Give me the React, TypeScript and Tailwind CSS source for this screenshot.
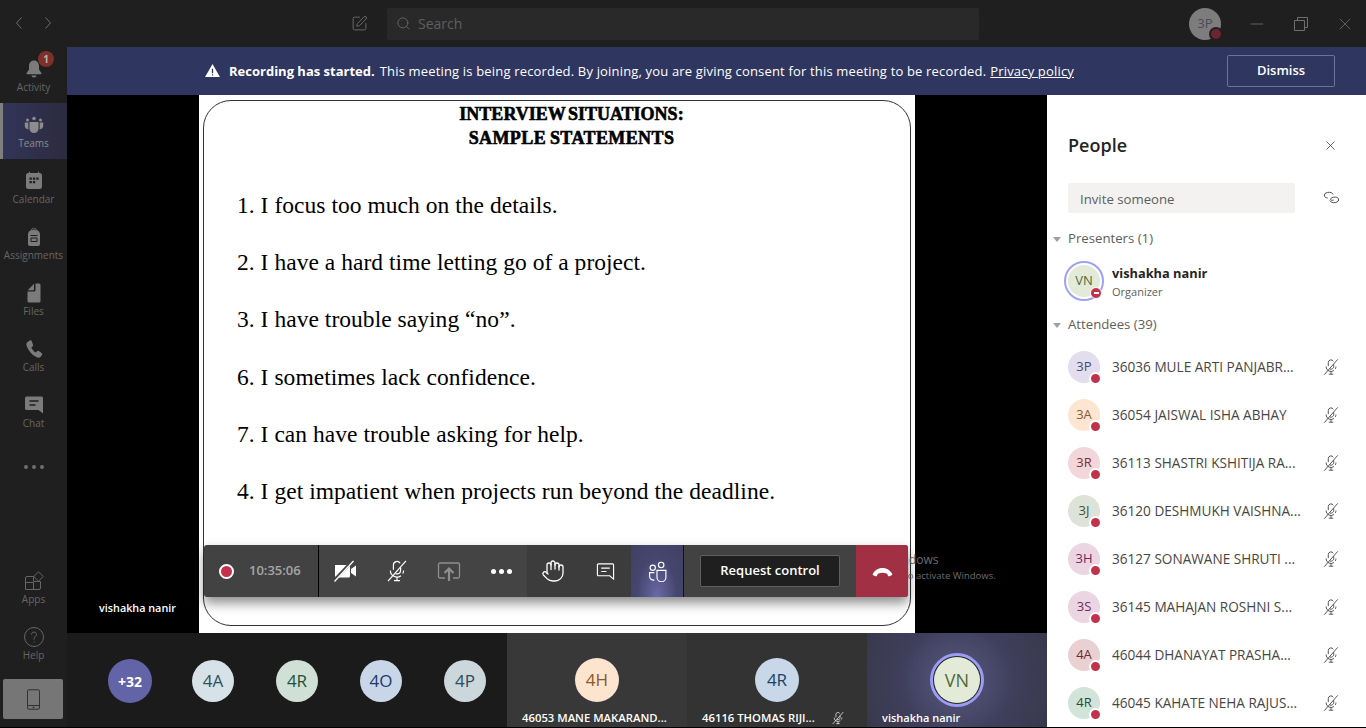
import { Hand, Minus, Search, SquarePen, X } from 'lucide-react';

const ui = { fontFamily: '"Open Sans", "Noto Sans", sans-serif' };
const slideFont = { fontFamily: '"Liberation Serif", serif' };

const MicOff = ({ className = '' }: { className?: string }) => (
  <svg viewBox="0 0 20 20" fill="none" stroke="currentColor" strokeWidth="1" className={className}>
    <path d="M7 9V5a3 3 0 0 1 5.6-1.4M13 7v2.5a3 3 0 0 1-4.4 2.6" />
    <path d="M4.5 9.5a5.5 5.5 0 0 0 8.8 4.4M15.5 9.5a5.5 5.5 0 0 1-.7 2.6M10 15v3M7.5 18h5" />
    <path d="M2.5 18.5 17.5 1.5" />
  </svg>
);

const RailIcon = ({ name }: { name: string }) => {
  const c = 'w-5 h-5';
  switch (name) {
    case 'Activity':
      return (
        <svg viewBox="0 0 20 20" className={c} fill="#7b7b7b">
          <path d="M10 1.5c-3.2 0-5 2.6-5 5.6v3.4L2.6 14c-.4.6 0 1.2.7 1.2h13.4c.7 0 1.1-.6.7-1.2L15 10.500V7.100c0-3-1.800-5.600-5-5.600Z" />
          <path d="M7.500 16.500h5a2.500 2 0 0 1-5 0Z" />
        </svg>
      );
    case 'Teams':
      return (
        <svg viewBox="0 0 20 20" className={c} fill="#8c8c8c">
          <circle cx="10" cy="3.500" r="1.800" />
          <circle cx="3.500" cy="5" r="1.500" />
          <circle cx="16.500" cy="5" r="1.500" />
          <path d="M5.500 7h9v6.500a4.500 4.500 0 0 1-9 0Z" />
          <path d="M.8 7.500h3.500v5.500l.3 1.200C2.500 14.300.8 13 .8 11ZM19.200 7.500h-3.500v5.500l-.3 1.200c2.100.1 3.800-1.200 3.800-3.200Z" />
        </svg>
      );
    case 'Calendar':
      return (
        <svg viewBox="0 0 20 20" className={c}>
          <path fill="#7b7b7b" d="M5 .8h1v1.200h8V.8h1V2h.5A2.500 2.500 0 0 1 18 4.500v11a2.500 2.500 0 0 1-2.500 2.500h-11A2.500 2.500 0 0 1 2 15.500v-11A2.500 2.500 0 0 1 4.500 2H5Z" />
          <path fill="#1f1f1f" d="M5.500 6.500h2.300v2.300H5.500zM8.900 6.500h2.300v2.300H8.900zM12.300 6.500h2.300v2.300h-2.300zM5.500 10h2.300v2.300H5.500zM8.900 10h2.300v2.300H8.900z" />
        </svg>
      );
    case 'Assignments':
      return (
        <svg viewBox="0 0 20 20" className={c}>
          <path fill="#7b7b7b" d="M10 .8c1.500 0 2.600 1 2.900 2.400 1.900.6 3.100 2 3.100 4.300V17a2 2 0 0 1-2 2H6a2 2 0 0 1-2-2V7.500c0-2.300 1.200-3.700 3.100-4.300C7.400 1.800 8.500.8 10 .8Z" />
          <path fill="none" stroke="#1f1f1f" d="M6.500 8.500h7M7 11h6v3.500H7zM8.500 3.200a1.500 1.500 0 0 1 3 0" />
        </svg>
      );
    case 'Files':
      return (
        <svg viewBox="0 0 20 20" className={c} fill="#7b7b7b">
          <path d="M11.500 .5H15a1.500 1.500 0 0 1 1.500 1.500v16a1.500 1.500 0 0 1-1.500 1.500H5A1.500 1.500 0 0 1 3.500 18V8.500H10A1.500 1.500 0 0 0 11.500 7Z" />
          <path d="M10 .8V6.500a.7.700 0 0 1-.7.7H3.700Z" />
        </svg>
      );
    case 'Calls':
      return (
        <svg viewBox="0 0 20 20" className={c} fill="#7b7b7b">
          <path d="M5.800 1.500 3.500 3C2.300 3.900 2 5.500 2.800 7.400c1.900 4.700 5.300 8.400 9.500 10.700 1.800 1 3.500.7 4.400-.4l1.300-1.800c.5-.7.300-1.500-.4-2l-2.800-1.900c-.7-.4-1.400-.3-1.900.3l-1 1.200c-2-1.100-3.600-3-4.600-5.100l1.200-1c.6-.5.800-1.300.4-2L7.700 2c-.4-.8-1.300-1-1.900-.5Z" />
        </svg>
      );
    case 'Chat':
      return (
        <svg viewBox="0 0 20 20" className={c}>
          <path fill="#7b7b7b" d="M2.500 1.500h15A1.500 1.500 0 0 1 19 3v15.500L14.500 15h-12A1.500 1.500 0 0 1 1 13.500V3a1.500 1.500 0 0 1 1.500-1.500Z" />
          <path stroke="#1f1f1f" strokeWidth="1.300" d="M5.500 6h9M5.500 10h6" />
        </svg>
      );
    case 'Apps':
      return (
        <svg viewBox="0 0 20 20" className={c} fill="none" stroke="#666">
          <path d="M9.500 5.500H3A1.500 1.500 0 0 0 1.500 7v11.500H15a1.500 1.500 0 0 0 1.500-1.500v-6.500H9.500ZM1.500 11.500h8v7" />
          <path d="m14.500 .8 4.700 4.700-4.700 4.700-4.700-4.700Z" />
        </svg>
      );
    default:
      return (
        <svg viewBox="0 0 20 20" className={c} fill="none" stroke="#666">
          <circle cx="10" cy="10" r="9.500" />
          <path d="M7.500 7.500a2.500 2.500 0 1 1 3.800 2.200c-.9.500-1.300 1-1.300 2v.8M10 14.500v1" />
        </svg>
      );
  }
};

const RailItem = ({ name, active }: { name: string; active?: boolean }) => (
  <div className={`relative h-14 flex flex-col items-center pt-3 ${active ? 'bg-gradient-to-r from-[#33345a] to-[#2c2b3f]' : ''}`}>
    {active && <div className="absolute left-0 top-0 bottom-0 w-[3px] bg-[#7f7f80]" />}
    <RailIcon name={name} />
    <span className={`text-[10px] leading-[14px] mt-[1px] ${active ? 'text-[#8d8d8d]' : 'text-[#666666]'}`}>{name}</span>
    {name === 'Activity' && (
      <span className="absolute left-[38px] top-[4px] w-4 h-4 rounded-full bg-[#7f3028] text-[#b9b0ae] text-[10px] font-bold leading-4 text-center">1</span>
    )}
  </div>
);

const slideLines = [
  '1. I focus too much on the details.',
  '2. I have a hard time letting go of a project.',
  '3. I have trouble saying “no”.',
  '6. I sometimes lack confidence.',
  '7. I can have trouble asking for help.',
  '4. I get impatient when projects run beyond the deadline.',
];

const SlideBox = () => (
  <div className="w-[716px] h-full bg-white pt-[5px] pl-[4px]">
    <div className="w-[708px] h-[526px] border border-[#333] rounded-[28px] pl-[33px] text-black" style={slideFont}>
      <div className="text-center font-bold text-[18px] leading-[24px] pr-[4px] pt-[1px]" style={{ WebkitTextStroke: '0.6px #000' }}>
        <div className="[word-spacing:-2px]">INTERVIEW SITUATIONS:</div>
        <div className="tracking-[0.4px] [word-spacing:-1px]">SAMPLE STATEMENTS</div>
      </div>
      <div className="mt-[40px] flex flex-col gap-[27.2px]">
        {slideLines.map((l) => (
          <div key={l} className="text-[23.5px] leading-[30px] tracking-[0.04px] whitespace-nowrap">{l}</div>
        ))}
      </div>
    </div>
  </div>
);

const Toolbar = () => (
  <div className="absolute left-[137px] top-[450px] w-[704px] h-[52px] flex rounded-[3px] overflow-hidden bg-[#424242] shadow-[0_6px_12px_rgba(0,0,0,0.45)]" style={ui}>
    <div className="w-[115px] border-r border-black flex items-center pl-[15px] shrink-0">
      <span className="w-[15px] h-[15px] rounded-full border-2 border-white bg-[#c4314b]" />
      <span className="ml-[15px] text-[13px] font-semibold text-[#a6a6a6]">10:35:06</span>
    </div>
    <div className="w-[208px] flex items-center bg-[#444444] shrink-0">
      <div className="w-[52px] flex justify-center">
        <svg viewBox="0 0 24 24" className="w-6 h-6" fill="#fff">
          <path d="M2 6h13.500A1.500 1.500 0 0 1 17 7.500V17a1.500 1.500 0 0 1-1.500 1.500H3.500A1.500 1.500 0 0 1 2 17Z" />
          <path d="m18 10 5-3.500v11L18 14Z" />
          <path d="M1 21.500 19 2.500" stroke="#444" strokeWidth="3" />
          <path d="M1.500 22.500 20.500 2" stroke="#fff" strokeWidth="1.300" />
        </svg>
      </div>
      <div className="w-[52px] flex justify-center text-white">
        <MicOff className="w-6 h-6" />
      </div>
      <div className="w-[52px] flex justify-center">
        <svg viewBox="0 0 24 24" className="w-6 h-6" fill="none" stroke="#8f8f8f" strokeWidth="1.300">
          <path d="M8 19H3a1.500 1.500 0 0 1-1.500-1.500v-12A1.500 1.500 0 0 1 3 4h18a1.500 1.500 0 0 1 1.500 1.500v12A1.500 1.500 0 0 1 21 19h-5" />
          <path d="M12 22V10M7.500 14 12 9.500l4.500 4.500" strokeWidth="2.200" />
        </svg>
      </div>
      <div className="w-[52px] flex justify-center gap-[3px]">
        <span className="w-[5px] h-[5px] rounded-full bg-white" />
        <span className="w-[5px] h-[5px] rounded-full bg-white" />
        <span className="w-[5px] h-[5px] rounded-full bg-white" />
      </div>
    </div>
    <div className="w-[104px] flex items-center bg-[#3c3c3c] shrink-0">
      <div className="w-[52px] flex justify-center text-white">
        <Hand className="w-6 h-6" strokeWidth={1.300} />
      </div>
      <div className="w-[52px] flex justify-center">
        <svg viewBox="0 0 20 20" className="w-[19px] h-[19px]" fill="none" stroke="#fff" strokeWidth="1.200">
          <path d="M2.500 2h15A1 1 0 0 1 18.500 3v15l-4-3.500h-12a1 1 0 0 1-1-1V3a1 1 0 0 1 1-1Z" />
          <path d="M5.500 6.500h9M5.500 10h5.500" />
        </svg>
      </div>
    </div>
    <div className="w-[53px] border-r border-[#111] flex items-center justify-center shrink-0 bg-[radial-gradient(ellipse_at_50%_100%,#6a6aa8_0%,#45466d_55%,#3f4062_100%)]">
      <svg viewBox="0 0 20 20" className="w-[21px] h-[21px]" fill="none" stroke="#fff" strokeWidth="1.100">
        <circle cx="13.500" cy="3.800" r="2.600" />
        <circle cx="5.500" cy="6.500" r="2.500" />
        <path d="M9.500 9h8.500v6.500a4.200 4.200 0 0 1-8.500 0ZM7 11H2.500v3.500A3.500 3.500 0 0 0 7 18" />
      </svg>
    </div>
    <div className="flex-1 flex items-center pl-[16px]">
      <div className="w-[140px] h-[32px] rounded-[2px] border border-[#5f5f5f] bg-[#1f1f1f] text-white text-[13px] font-semibold flex items-center justify-center">
        Request control
      </div>
    </div>
    <div className="w-[52px] bg-[#a13045] flex items-center justify-center shrink-0">
      <svg viewBox="0 0 24 12" className="w-[21px] h-[11px]" fill="#fff">
        <path d="M1 8.500C4 3.500 8 2 12 2s8 1.500 11 6.500c.4.800.2 1.500-.5 1.900l-2.500 1c-.7.300-1.400 0-1.700-.6l-1-2.300c-1.500-.7-3.500-1-5.300-1s-3.800.3-5.300 1l-1 2.300c-.3.600-1 .9-1.700.6l-2.500-1C.8 10 .6 9.300 1 8.500Z" />
      </svg>
    </div>
  </div>
);

const stripAvatars = [
  { t: '4A', bg: 'bg-[#d6e2e8]', fg: 'text-[#2f5060]' },
  { t: '4R', bg: 'bg-[#d0e0d6]', fg: 'text-[#245038]' },
  { t: '4O', bg: 'bg-[#c8d6e8]', fg: 'text-[#1c3a6c]' },
  { t: '4P', bg: 'bg-[#ccd7dc]', fg: 'text-[#2c4c5a]' },
];

const Tile = ({ tile }: { tile: 'h' | 'r' | 'v' }) => {
  if (tile === 'v') {
    return (
      <div className="w-[180px] relative flex justify-center bg-[radial-gradient(circle_at_50%_50%,#5a5a84_0%,#3f3f5c_55%,#38384c_100%)]">
        <div className="mt-[20px] w-[54px] h-[54px] rounded-full border-[3px] border-[#9a9cf5] bg-[#242424] p-[1px]">
          <div className="w-full h-full rounded-full bg-[#e4ead8] text-[#4f6b3a] text-[18px] flex items-center justify-center">VN</div>
        </div>
        <span className="absolute left-[15px] bottom-0 text-white text-[11px] font-semibold leading-[18px]">vishakha nanir</span>
      </div>
    );
  }
  const h = tile === 'h';
  return (
    <div className={`w-[180px] relative flex justify-center ${h ? 'bg-[#383838]' : 'bg-[#333333]'}`}>
      <div className={`mt-[25px] w-11 h-11 rounded-full text-[17px] flex items-center justify-center ${h ? 'bg-[#fce4cf] text-[#8a5a2a]' : 'bg-[#c8d8e8] text-[#1c3f6c]'}`}>
        {h ? '4H' : '4R'}
      </div>
      <span className="absolute left-[15px] bottom-0 text-white text-[11.3px] font-semibold leading-[18px] whitespace-nowrap">
        {h ? '46053 MANE MAKARAND...' : '46116 THOMAS RIJI...'}
      </span>
      {!h && <MicOff className="absolute left-[144px] bottom-[2px] w-[14px] h-[14px] text-white" />}
    </div>
  );
};

const people = [
  { t: '3P', n: '36036 MULE ARTI PANJABR...', bg: 'bg-[#e2deee]', fg: 'text-[#4a4678]' },
  { t: '3A', n: '36054 JAISWAL ISHA ABHAY', bg: 'bg-[#fce6d2]', fg: 'text-[#8a5a2a]' },
  { t: '3R', n: '36113 SHASTRI KSHITIJA RA...', bg: 'bg-[#f3d6d9]', fg: 'text-[#78303c]' },
  { t: '3J', n: '36120 DESHMUKH VAISHNA...', bg: 'bg-[#dde3d9]', fg: 'text-[#3c5238]' },
  { t: '3H', n: '36127 SONAWANE SHRUTI ...', bg: 'bg-[#ecd5e3]', fg: 'text-[#6e2a5a]' },
  { t: '3S', n: '36145 MAHAJAN ROSHNI S...', bg: 'bg-[#ecd5e3]', fg: 'text-[#6e2a5a]' },
  { t: '4A', n: '46044 DHANAYAT PRASHA...', bg: 'bg-[#e9d0d3]', fg: 'text-[#6e2a30]' },
  { t: '4R', n: '46045 KAHATE NEHA RAJUS...', bg: 'bg-[#d2e4da]', fg: 'text-[#1f4f3a]' },
];

const Caret = () => <span className="w-0 h-0 border-x-[4px] border-x-transparent border-t-[5px] border-t-[#a0a0a0]" />;

const PeoplePanel = () => (
  <div className="w-[319px] shrink-0 bg-white overflow-hidden" style={ui}>
    <div className="flex items-center justify-between pl-[21px] pr-[28px] pt-[37px] h-[63px]">
      <span className="text-[18px] font-semibold text-[#252423] leading-[26px]">People</span>
      <X className="w-[15px] h-[15px] text-[#444]" strokeWidth={1.300} />
    </div>
    <div className="flex items-center pl-[21px] pr-[26px] mt-[25px] justify-between">
      <div className="w-[227px] h-[30px] rounded-[2px] bg-[#f3f2f1] pl-[12px] pt-[3px] flex items-center text-[13.200px] text-[#605e5c]">Invite someone</div>
      <svg viewBox="0 0 20 20" className="w-[17px] h-[17px] -mt-[1px]" fill="none" stroke="#444" strokeWidth="1.100">
        <path d="M12 6.500C11 4.500 8.500 3.500 5.500 4 2.500 4.500 1 6.500 1.800 8.500c.5 1.300 2 2 3.700 2" />
        <path d="M8 13.500c1 2 3.500 3 6.500 2.500 3-.5 4.500-2.500 3.700-4.500-.5-1.300-2-2-3.700-2-3 0-6 1-5.500 3 .3 1 2 1 3.500.5" />
      </svg>
    </div>
    <div className="flex items-center mt-[16px] pl-[6px] h-[20px] text-[13.200px] text-[#605e5c]">
      <Caret />
      <span className="ml-[7px]">Presenters (1)</span>
    </div>
    <div className="flex items-center mt-[12px] pl-[17px] h-[40px]">
      <div className="relative w-[40px] h-[40px] rounded-full border-2 border-[#9ea2f5] p-[2px] shrink-0">
        <div className="w-full h-full rounded-full bg-[#e4ead8] text-[#4f6b3a] text-[13px] flex items-center justify-center">VN</div>
        <span className="absolute right-0 bottom-0 w-[12px] h-[12px] rounded-full bg-[#c4314b] border border-white flex items-center justify-center">
          <span className="w-[5px] h-[1.500px] bg-white" />
        </span>
      </div>
      <div className="ml-[8px] pt-[2px] flex flex-col">
        <span className="text-[12.800px] font-bold text-[#252423] leading-[18px]">vishakha nanir</span>
        <span className="text-[11px] text-[#605e5c] leading-[19px]">Organizer</span>
      </div>
    </div>
    <div className="flex items-center mt-[14px] pl-[6px] h-[20px] text-[13.200px] text-[#605e5c]">
      <Caret />
      <span className="ml-[7px]">Attendees (39)</span>
    </div>
    <div className="mt-[16px] flex flex-col gap-[16px]">
      {people.map((p) => (
        <div key={p.t + p.n} className="flex items-center h-[32px] pl-[21px] pr-[26px]">
          <div className={`relative w-8 h-8 rounded-full shrink-0 text-[13px] font-medium flex items-center justify-center ${p.bg} ${p.fg}`}>
            {p.t}
            <span className="absolute right-[-2px] bottom-[-2px] w-[13px] h-[13px] rounded-full bg-[#c4314b] border-2 border-white" />
          </div>
          <span className="ml-[12px] pt-[1px] text-[13.600px] text-[#484644] whitespace-nowrap">{p.n}</span>
          <MicOff className="ml-auto w-[18px] h-[18px] text-[#444]" />
        </div>
      ))}
    </div>
  </div>
);

export default function App() {
  return (
    <div className="w-[1366px] h-[728px] overflow-hidden bg-black" style={ui}>
      <div className="w-full h-[727px] bg-[#1f1f1f] flex flex-col">
        {/* title bar */}
        <div className="h-[47px] shrink-0 flex items-center relative">
          <svg viewBox="0 0 40 14" className="absolute left-[15px] top-[16px] w-[40px] h-[14px]" fill="none" stroke="#6e6e6e">
            <path d="M6.500 1.500 1.500 7l5 5.500M30.500 1.500l5 5.500-5 5.500" />
          </svg>
          <SquarePen className="ml-[351px] w-[17px] h-[17px] text-[#6e6e6e]" strokeWidth={1.300} />
          <div className="ml-[19px] w-[592px] h-[32px] bg-[#292929] rounded-[2px] flex items-center pl-[9px]">
            <Search className="w-[15px] h-[15px] text-[#6e6e6e]" strokeWidth={1.300} />
            <span className="ml-[7px] text-[14px] text-[#5f5f5f]">Search</span>
          </div>
          <div className="relative ml-[210px] w-8 h-8 rounded-full bg-[#7d7d7d] text-[#4a4a5a] text-[13px] flex items-center justify-center">
            3P
            <span className="absolute right-[-2px] bottom-[-1px] w-[14px] h-[14px] rounded-full bg-[#6e2430] border-2 border-[#1f1f1f]" />
          </div>
          <Minus className="ml-[26px] w-5 h-5 text-[#6e6e6e]" strokeWidth={1} />
          <svg viewBox="0 0 14 14" className="ml-[27px] w-[14px] h-[14px]" fill="none" stroke="#6e6e6e">
            <path d="M.5 3.500h10v10H.5zM3.500 3.500V.5h10v10h-3" />
          </svg>
          <X className="ml-[27px] w-5 h-5 text-[#6e6e6e]" strokeWidth={1} />
        </div>

        <div className="flex-1 flex min-h-0">
          {/* app rail */}
          <div className="w-[67px] shrink-0 flex flex-col">
            {['Activity', 'Teams', 'Calendar', 'Assignments', 'Files', 'Calls', 'Chat'].map((n) => (
              <RailItem key={n} name={n} active={n === 'Teams'} />
            ))}
            <div className="h-14 flex justify-center gap-[4px] pt-[26px]">
              <span className="w-[4px] h-[4px] rounded-full bg-[#6e6e6e]" />
              <span className="w-[4px] h-[4px] rounded-full bg-[#6e6e6e]" />
              <span className="w-[4px] h-[4px] rounded-full bg-[#6e6e6e]" />
            </div>
            <div className="mt-[64px]">
              <RailItem name="Apps" />
              <RailItem name="Help" />
            </div>
            <div className="ml-[3px] w-[60px] mt-[8px] h-[40px] rounded-[2px] bg-[#767676] flex items-center justify-center">
              <svg viewBox="0 0 14 22" className="w-[13px] h-[21px]" fill="none" stroke="#2a2a2a">
                <path d="M2 .5h10A1.500 1.500 0 0 1 13.500 2v18a1.500 1.500 0 0 1-1.500 1.500H2A1.500 1.500 0 0 1 .5 20V2A1.500 1.500 0 0 1 2 .5ZM.5 17.500h13M6 19.500h2" />
              </svg>
            </div>
          </div>

          <div className="flex-1 flex flex-col min-w-0">
            {/* recording banner */}
            <div className="h-[48px] shrink-0 bg-[#2f365f] flex items-center pt-[1px] text-white text-[13px] relative">
              <svg viewBox="0 0 16 14" className="absolute left-[138px] top-[17px] w-[15px] h-[13px]" fill="#fff">
                <path d="M8 0 16 14H0Z" />
                <path d="M7.300 5h1.400v5H7.300zM7.300 11h1.400v1.400H7.300z" fill="#2f365f" />
              </svg>
              <span className="ml-[162px] font-bold">Recording has started.</span>
              <span className="ml-[5px] tracking-[0.17px]">This meeting is being recorded. By joining, you are giving consent for this meeting to be recorded.</span>
              <span className="ml-[4px] tracking-[0.17px] underline">Privacy policy</span>
              <div className="absolute left-[1160px] top-[8px] w-[108px] h-[32px] border border-[#6d7296] rounded-[2px] font-semibold flex items-center justify-center">Dismiss</div>
            </div>

            <div className="flex-1 flex min-h-0">
              <div className="w-[980px] flex flex-col shrink-0">
                {/* shared screen */}
                <div className="relative h-[538px] bg-black flex justify-center overflow-hidden">
                  <SlideBox />
                  <span className="absolute left-[32px] top-[505px] text-white text-[10.800px] font-semibold leading-[16px]">vishakha nanir</span>
                  <div className="absolute left-[773px] top-[456px] text-[#6d6d6d] leading-[15px] whitespace-nowrap">
                    <div className="text-[12px] leading-[17px]">Activate Windows</div>
                    <div className="text-[9.500px]">Go to Settings to activate Windows.</div>
                  </div>
                  <Toolbar />
                </div>
                {/* participant strip */}
                <div className="flex-1 flex bg-[#1b1b1b]">
                  <div className="w-[440px] shrink-0 flex items-start pt-[26px] pl-[41px] gap-[42px]">
                    <div className="w-11 h-11 -mr-[2px] rounded-full bg-[#6264a7] text-white text-[14px] font-bold flex items-center justify-center">+32</div>
                    {stripAvatars.map((a) => (
                      <div key={a.t} className={`w-[42px] h-[42px] mt-[1px] rounded-full text-[17px] flex items-center justify-center ${a.bg} ${a.fg}`}>{a.t}</div>
                    ))}
                  </div>
                  <Tile tile="h" />
                  <Tile tile="r" />
                  <Tile tile="v" />
                </div>
              </div>
              <PeoplePanel />
            </div>
          </div>
        </div>
      </div>
    </div>
  );
}
